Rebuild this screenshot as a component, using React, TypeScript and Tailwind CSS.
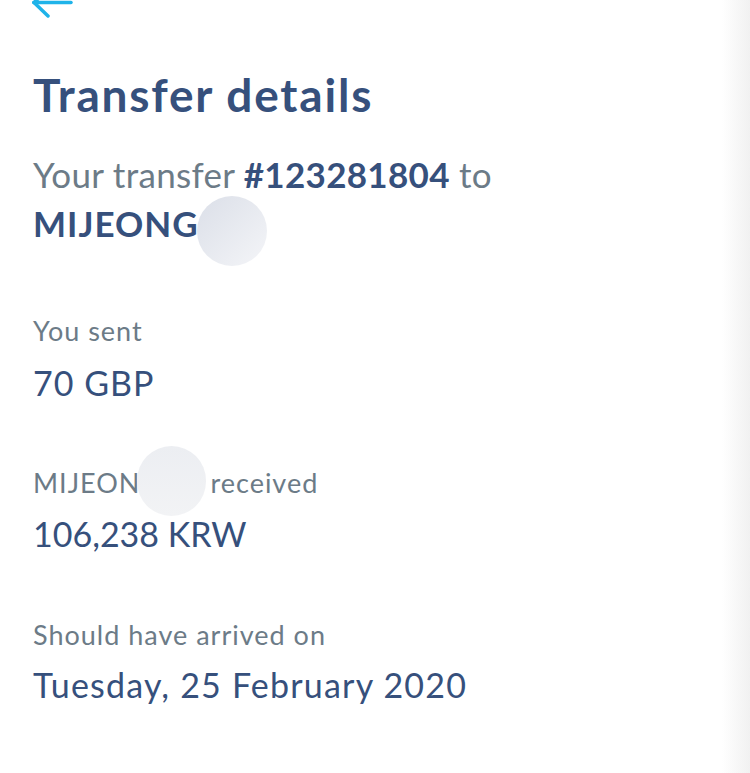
export default function App() {
  const navy = "text-[#36507c]";
  const gray = "text-[#6c7b87]";
  return (
    <div className="flex h-[773px] w-[750px] bg-white overflow-hidden" style={{ fontFamily: "Lato, 'Open Sans', sans-serif" }}>
      <div className="flex-1 flex flex-col pl-[33px]">
        <svg width="44" height="18" viewBox="0 0 44 18" className="block -ml-[2px] shrink-0">
          <g stroke="#1fb3e9" strokeWidth="3.5" strokeLinecap="round" fill="none">
            <line x1="3" y1="2.5" x2="40" y2="2.5" />
            <line x1="3" y1="2.5" x2="17" y2="16" />
            <line x1="3" y1="2.5" x2="17" y2="-10" />
          </g>
        </svg>
        <h1 className={`mt-[49px] text-[46px] leading-[56px] font-bold tracking-[1.8px] ${navy}`}>Transfer details</h1>
        <div className="mt-[27px] text-[35px] leading-[49px] tracking-[0.3px]">
          <div>
            <span className={gray}>Your transfer </span>
            <span className={`font-bold ${navy}`}>#123281804</span>
            <span className={gray}> to</span>
          </div>
          <div className="flex items-start">
            <span className={`font-bold tracking-[1px] ${navy}`}>MIJEONG</span>
            <span className="inline-block h-[70px] w-[70px] -ml-[2px] -mt-[3px] -mb-[18px] rounded-full bg-linear-to-br from-[#dbdfe8] to-[#f4f5f8]" />
          </div>
        </div>
        <div className={`mt-[63px] text-[27px] leading-[40px] tracking-[1px] ${gray}`}>You sent</div>
        <div className={`mt-[10px] text-[34px] leading-[44px] tracking-[1px] ${navy}`}>70 GBP</div>
        <div className={`mt-[58px] flex items-start text-[27px] leading-[40px] tracking-[1px] ${gray}`}>
          <span>MIJEON</span>
          <span className="inline-block h-[70px] w-[69px] -ml-[3px] -mt-[17px] -mb-[13px] rounded-full bg-linear-to-b from-[#eceef2] to-[#f2f3f5]" />
          <span className="ml-[4px]">received</span>
        </div>
        <div className={`mt-[9px] text-[34px] leading-[44px] tracking-[0px] ${navy}`}>106,238 KRW</div>
        <div className={`mt-[59px] text-[27px] leading-[40px] tracking-[1px] ${gray}`}>Should have arrived on</div>
        <div className={`mt-[8px] text-[34px] leading-[44px] tracking-[1.2px] ${navy}`}>Tuesday, 25 February 2020</div>
      </div>
      <div className="w-[28px] bg-linear-to-r from-white to-[#f1f1f1]" />
    </div>
  );
}
